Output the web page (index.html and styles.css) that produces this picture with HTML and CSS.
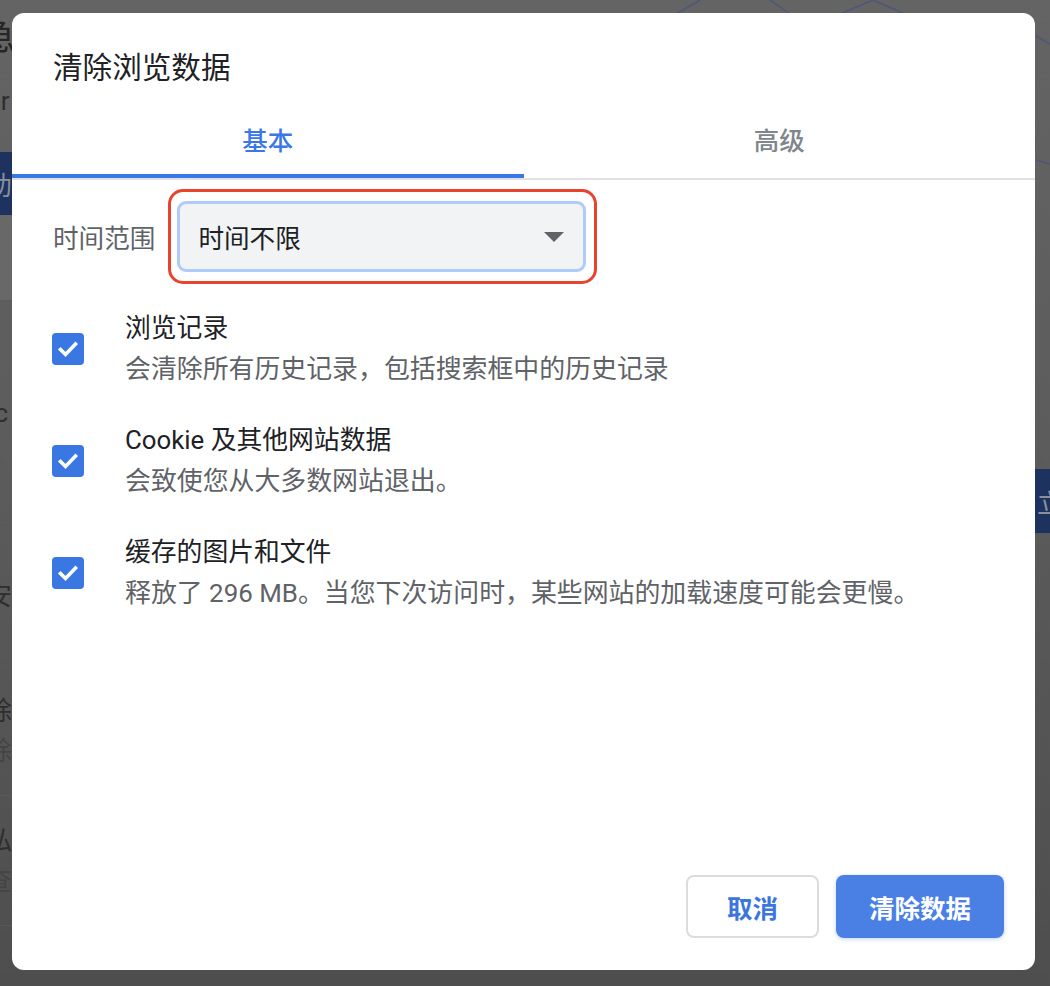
FILE: index.html
```html
<!DOCTYPE html>
<html lang="zh-CN">
<head>
<meta charset="utf-8">
<title>清除浏览数据</title>
<link rel="stylesheet" href="styles.css">
</head>
<body>
<div class="backdrop" aria-hidden="true">
  <svg class="bg-art" width="1050" height="986" viewBox="0 0 1050 986">
    <path d="M676 14 L700 0 M790 14 L770 0 M840 14 L873 0 L905 14 M1036 36 L1050 44 M1036 160 L1050 164" fill="none" stroke="#4b5878" stroke-width="1.5"/>
  </svg>
  <div class="bg-left">
    <div class="bg-row bg-top"><span class="bg-big">急</span></div>
    <div class="bg-row bg-sub"><span class="bg-txt">or</span></div>
    <div class="bg-row bg-navy"><span class="bg-light">助</span></div>
    <div class="bg-row bg-plain"></div>
    <div class="bg-row bg-mid"><span class="bg-txt">rc</span></div>
    <div class="bg-row bg-mid2"><span class="bg-txt">安</span></div>
    <div class="bg-row bg-two"><span class="bg-txt">除</span><span class="bg-txt dim">除</span></div>
    <div class="bg-row bg-two"><span class="bg-txt">私</span><span class="bg-txt dim">查</span></div>
  </div>
  <div class="bg-right">
    <div class="bg-navy-r"><span class="bg-light">立</span></div>
  </div>
</div>

<div class="dialog" role="dialog">
  <h1 class="title">清除浏览数据</h1>
  <div class="tabs">
    <div class="tab active">基本</div>
    <div class="tab">高级</div>
  </div>

  <div class="time-row">
    <span class="time-label">时间范围</span>
    <div class="highlight">
      <div class="select">
        <span>时间不限</span>
        <svg class="arrow" width="20" height="10" viewBox="0 0 20 10"><path d="M0 0 H20 L10 10 Z" fill="#5f6368"/></svg>
      </div>
    </div>
  </div>

  <div class="option">
    <span class="checkbox"><svg width="32" height="32" viewBox="0 0 32 32"><path d="M8.5 16.5 L13.5 21.5 L23.5 11" fill="none" stroke="#fff" stroke-width="3.6" stroke-linecap="square"/></svg></span>
    <div class="option-text">
      <div class="option-title">浏览记录</div>
      <div class="option-sub">会清除所有历史记录，包括搜索框中的历史记录</div>
    </div>
  </div>

  <div class="option">
    <span class="checkbox"><svg width="32" height="32" viewBox="0 0 32 32"><path d="M8.5 16.5 L13.5 21.5 L23.5 11" fill="none" stroke="#fff" stroke-width="3.6" stroke-linecap="square"/></svg></span>
    <div class="option-text">
      <div class="option-title">Cookie 及其他网站数据</div>
      <div class="option-sub">会致使您从大多数网站退出。</div>
    </div>
  </div>

  <div class="option">
    <span class="checkbox"><svg width="32" height="32" viewBox="0 0 32 32"><path d="M8.5 16.5 L13.5 21.5 L23.5 11" fill="none" stroke="#fff" stroke-width="3.6" stroke-linecap="square"/></svg></span>
    <div class="option-text">
      <div class="option-title">缓存的图片和文件</div>
      <div class="option-sub">释放了 296 MB。当您下次访问时，某些网站的加载速度可能会更慢。</div>
    </div>
  </div>

  <div class="actions">
    <button class="btn btn-cancel">取消</button>
    <button class="btn btn-primary">清除数据</button>
  </div>
</div>
</body>
</html>
```

FILE: styles.css
```css
* { box-sizing: border-box; }

html, body {
  margin: 0;
  padding: 0;
}

body {
  width: 1050px;
  height: 986px;
  overflow: hidden;
  position: relative;
  font-family: Roboto, "Noto Sans CJK SC", sans-serif;
  background: linear-gradient(180deg, #646464 0%, #5c5c5c 45%, #4e4e4e 100%);
}

/* dimmed page behind the modal */
.backdrop {
  position: absolute;
  inset: 0;
  display: flex;
  justify-content: space-between;
}

.bg-art {
  position: absolute;
  left: 0;
  top: 0;
}

.bg-left {
  width: 30px;
  display: flex;
  flex-direction: column;
}

.bg-row {
  display: flex;
  flex-direction: column;
  justify-content: center;
  overflow: hidden;
  border-bottom: 1px solid #595959;
}

.bg-top { height: 66px; border-bottom: none; padding-top: 10px; }
.bg-sub { height: 86px; border-bottom: none; padding-bottom: 16px; }
.bg-navy { height: 63px; background: #1d325f; border-bottom: none; }
.bg-plain { height: 86px; background: #686868; border-bottom: 1px solid #5a5a5a; }
.bg-mid { height: 225px; }
.bg-mid2 { height: 140px; }
.bg-two { height: 130px; gap: 6px; }

.bg-big {
  font-size: 36px;
  color: #262626;
  margin-left: -20px;
  line-height: 40px;
}

.bg-txt {
  font-size: 26px;
  color: #2e2e2e;
  margin-left: -14px;
  line-height: 34px;
}

.bg-txt.dim { color: #444; }

.bg-light {
  font-size: 26px;
  color: #8a8f9c;
  margin-left: -14px;
}

.bg-right {
  width: 15px;
  padding-top: 469px;
}

.bg-navy-r {
  height: 64px;
  background: #1d325f;
  display: flex;
  align-items: center;
  overflow: hidden;
}

.bg-navy-r .bg-light { margin-left: 2px; }

/* dialog */
.dialog {
  position: absolute;
  left: 12px;
  top: 13px;
  width: 1023px;
  height: 957px;
  background: #fff;
  border-radius: 12px;
  display: flex;
  flex-direction: column;
  padding-top: 35px;
}

.title {
  margin: 0 0 10px 41px;
  font-size: 29.6px;
  line-height: 40px;
  font-weight: 400;
  color: #202124;
}

.tabs {
  display: flex;
  border-bottom: 2px solid #dfe1e5;
}

.tab {
  flex: 1;
  height: 80px;
  padding-top: 4px;
  border-bottom: 4px solid transparent;
  display: flex;
  align-items: center;
  justify-content: center;
  font-size: 25.5px;
  font-weight: 500;
  color: #80868b;
}

.tab.active {
  color: #3b78e7;
  border-bottom-color: #3b78e7;
}

.time-row {
  display: flex;
  align-items: center;
  gap: 13px;
  margin-top: 9px;
  padding-left: 41px;
}

.time-label {
  font-size: 25.6px;
  color: #5f6368;
}

.highlight {
  border: 3px solid #e8432d;
  border-radius: 15px;
  padding: 9px 8px 9px 6px;
}

.select {
  width: 409px;
  height: 71px;
  background: #f1f3f4;
  border: 3px solid #aecbfa;
  border-radius: 9px;
  display: flex;
  align-items: center;
  justify-content: space-between;
  padding: 0 19px 0 18px;
  font-size: 25.6px;
  color: #202124;
}

.arrow { display: block; }

.time-row + .option { margin-top: 9px; }

.option {
  display: flex;
  align-items: center;
  height: 112px;
  padding-left: 40px;
  gap: 41px;
}

.checkbox {
  width: 32px;
  height: 32px;
  flex: none;
  border-radius: 4px;
  background: #3b77e2;
  display: flex;
}

.option-text {
  display: flex;
  flex-direction: column;
}

.option-title {
  font-size: 25.8px;
  line-height: 41px;
  color: #202124;
}

.option-sub {
  font-size: 25.9px;
  line-height: 41px;
  color: #5f6368;
}

.actions {
  margin-top: auto;
  display: flex;
  justify-content: flex-end;
  gap: 17px;
  padding: 0 31px 32px 0;
}

.btn {
  height: 63px;
  border-radius: 8px;
  font-family: Roboto, "Noto Sans CJK SC", sans-serif;
  font-size: 25.5px;
  font-weight: 700;
  cursor: pointer;
}

.btn-cancel {
  width: 133px;
  background: #fff;
  border: 2px solid #dadce0;
  color: #3a76de;
}

.btn-primary {
  width: 168px;
  background: #4a80e4;
  border: none;
  color: #fff;
  box-shadow: 0 1px 4px rgba(66, 133, 244, 0.35);
}
```
